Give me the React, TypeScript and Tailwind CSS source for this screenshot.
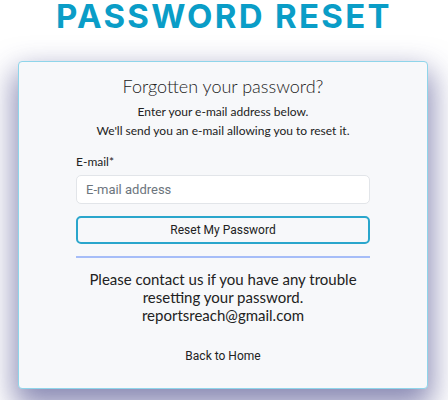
export default function App() {
  return (
    <div className="w-[448px] h-[400px] bg-white overflow-hidden relative">
      <h1
        className="text-center text-[#0a9dc7] font-bold text-[33px] leading-[32px] tracking-[0.07em]"
        style={{ fontFamily: "Inter, 'Open Sans', sans-serif" }}
      >
        PASSWORD RESET
      </h1>
      <div className="mt-[29px] ml-[18px] w-[410px] h-[328px] bg-[#f7f8fa] border border-[#8fd5ea] rounded-[4px] shadow-[0_14px_30px_4px_rgba(60,60,130,0.6)] flex flex-col items-center"
        style={{ fontFamily: "Lato, sans-serif" }}>
        <div className="mt-[13px] text-[18px] font-light text-[#222] leading-[22px]">Forgotten your password?</div>
        <div className="mt-[5px] text-[12px] text-[#222] leading-[19px] text-center">
          <div>Enter your e-mail address below.</div>
          <div>We'll send you an e-mail allowing you to reset it.</div>
        </div>
        <div className="w-[294px] mt-[14px]">
          <div className="text-[12px] text-[#222] leading-[16px]">E-mail*</div>
          <div className="mt-[5px] h-[29px] bg-white border border-[#e2e5e9] rounded-[5px] flex items-center px-[9px] text-[13px] text-[#6c757d]" style={{ fontFamily: "Roboto, sans-serif" }}>
            E-mail address
          </div>
          <div className="mt-[12px] h-[28px] border-2 border-[#2aa6cc] rounded-[5px] flex items-center justify-center text-[12px] text-[#222]" style={{ fontFamily: "Roboto, sans-serif" }}>
            Reset My Password
          </div>
          <div className="mt-[12px] h-[2px] bg-[#a6bdf8]"></div>
        </div>
        <div className="mt-[12px] text-[15px] text-[#222] leading-[18px] text-center w-[300px]">
          Please contact us if you have any trouble resetting your password. reportsreach@gmail.com
        </div>
        <div className="mt-[23px] text-[12px] text-[#222]" style={{ fontFamily: "Roboto, sans-serif" }}>Back to Home</div>
      </div>
    </div>
  );
}
